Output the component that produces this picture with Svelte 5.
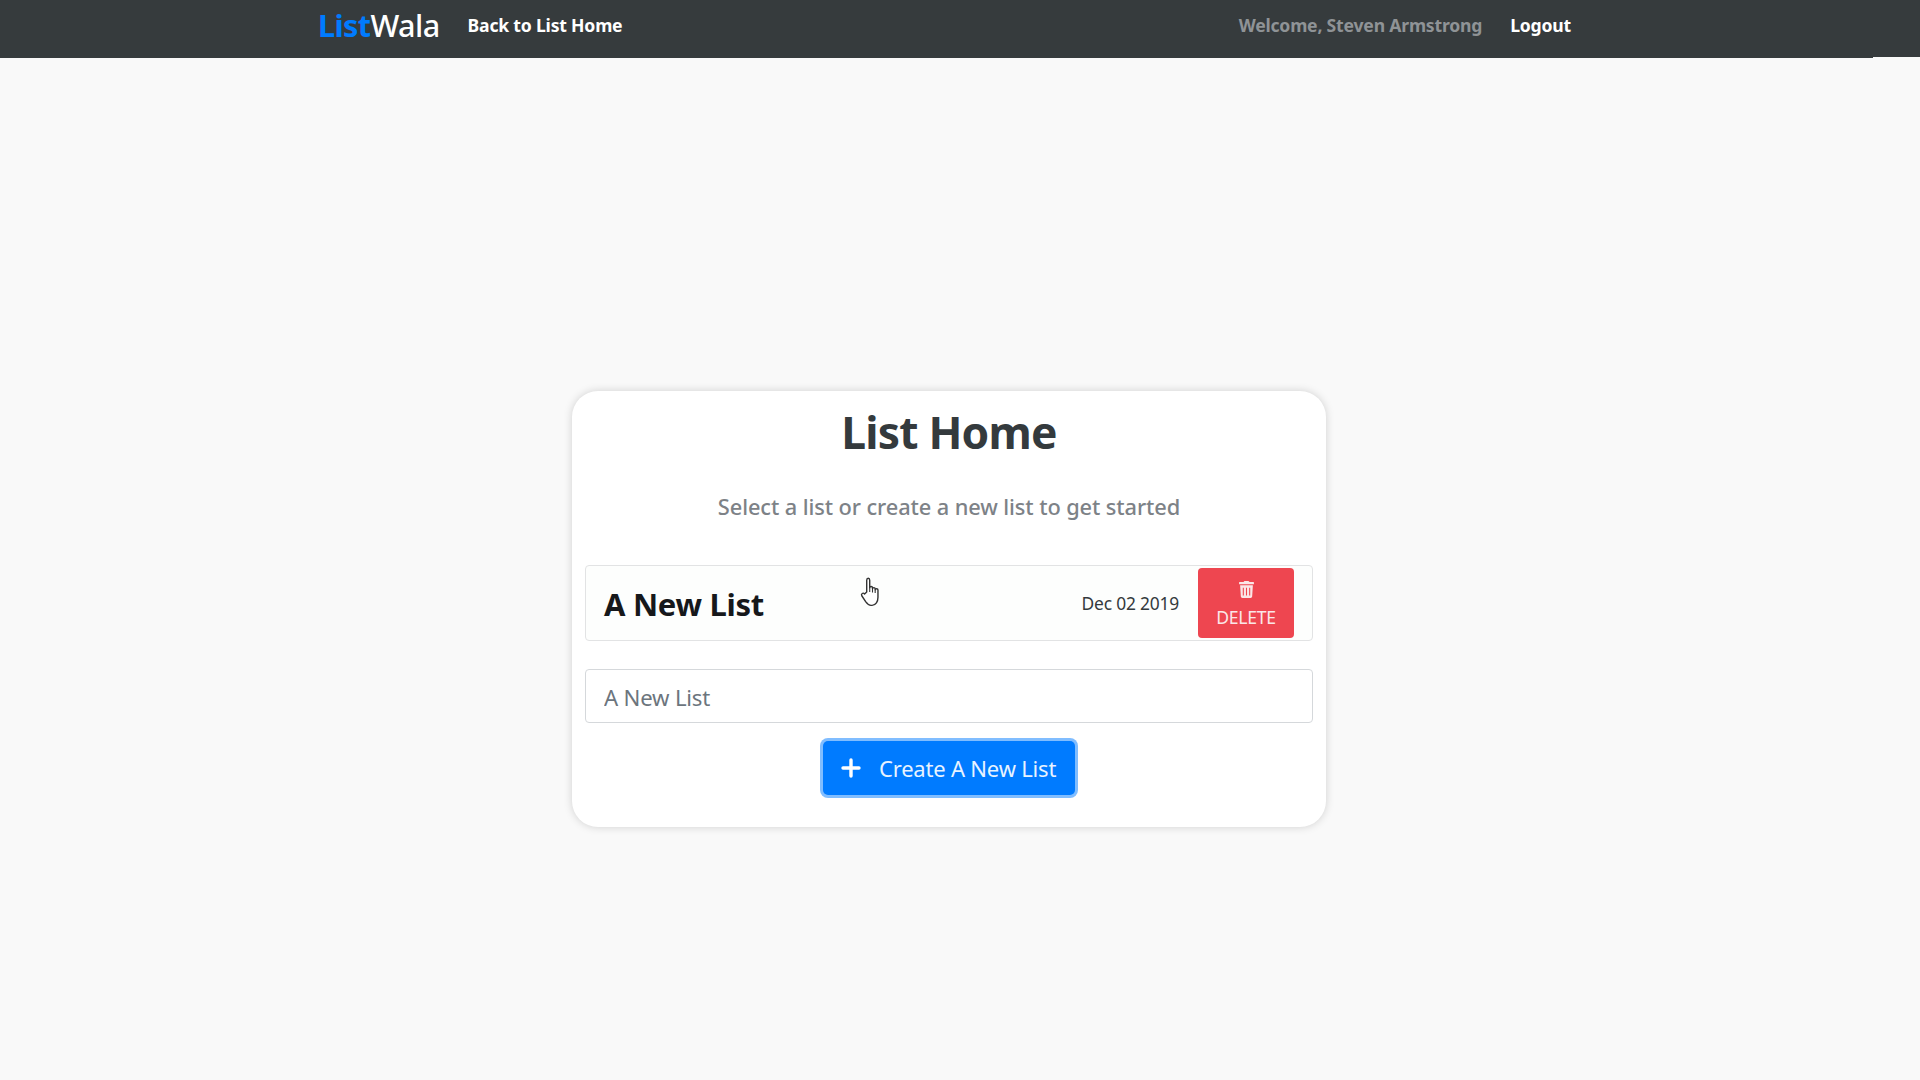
<script>
  let lists = [{ id: 1, name: 'A New List', date: 'Dec 02 2019' }];
</script>

<nav class="navbar">
  <div class="nav-inner">
    <a class="brand" href="#home"><span class="brand-list">List</span>Wala</a>
    <a class="nav-link back" href="#home">Back to List Home</a>
    <span class="welcome">Welcome, Steven Armstrong</span>
    <a class="nav-link" href="#logout">Logout</a>
  </div>
</nav>

<main class="page">
  <section class="card">
    <h1>List Home</h1>
    <p class="lead">Select a list or create a new list to get started</p>

    <ul class="lists">
      {#each lists as list (list.id)}
        <li class="list-item">
          <h2>{list.name}</h2>
          <span class="date">{list.date}</span>
          <button class="delete">
            <svg class="trash" viewBox="0 0 448 512" aria-hidden="true">
              <path fill="currentColor" d="M432 32H312l-9.4-18.7A24 24 0 0 0 281.1 0H166.8a23.7 23.7 0 0 0-21.4 13.3L136 32H16A16 16 0 0 0 0 48v32a16 16 0 0 0 16 16h416a16 16 0 0 0 16-16V48a16 16 0 0 0-16-16zM53.2 467a48 48 0 0 0 47.9 45h245.8a48 48 0 0 0 47.9-45L416 128H32zM144 200v240h-32V200zm96 0v240h-32V200zm96 0v240h-32V200z"/>
            </svg>
            <span>DELETE</span>
          </button>
          <svg class="cursor" viewBox="0 0 20 28" aria-hidden="true">
            <path fill="#fff" stroke="#333" stroke-width="1.3" stroke-linejoin="round" d="M6 14V3c0-2.4 2.8-2.4 2.8 0v7c0-1.6 2.6-1.6 2.6 0v1c0-1.5 2.5-1.5 2.5 0v1c0-1.4 2.6-1.4 2.6.2V19c0 4-2 7.5-5.5 7.5H10c-2.5 0-3.6-1.5-5-3.5L1.4 17.5c-1-1.8 1.2-3.3 2.6-1.7z"/>
            <path fill="none" stroke="#333" stroke-width="1" d="M8.8 10v4M11.4 11v3.5M13.9 12v3"/>
          </svg>
        </li>
      {/each}
    </ul>

    <input class="new-list" type="text" placeholder="A New List" />

    <button class="create">
      <svg class="plus" viewBox="0 0 20 20" aria-hidden="true">
        <path fill="none" stroke="currentColor" stroke-width="3.4" stroke-linecap="round" d="M10 2v16M2 10h16"/>
      </svg>
      Create A New List
    </button>
  </section>
</main>

<style>
  :global(body) {
    margin: 0;
    background: #f9f9f9;
    font-family: "Noto Sans", "Open Sans", sans-serif;
    color: #343a3d;
  }

  .navbar {
    position: relative;
    height: 58px;
    background: #363b3d;
  }

  /* the bar is a pixel shorter at the far right in the reference */
  .navbar::after {
    content: "";
    position: absolute;
    right: 0;
    bottom: 0;
    width: 47px;
    height: 1px;
    background: #f9f9f9;
  }

  .nav-inner {
    display: flex;
    align-items: center;
    height: 50px;
    width: 1253px;
    margin-left: 318px;
  }

  .brand {
    font-size: 30.6px;
    font-weight: 500;
    color: #fff;
    text-decoration: none;
    letter-spacing: -0.6px;
  }

  .brand-list {
    color: #007bff;
    font-weight: 700;
  }

  .nav-link {
    font-size: 17.6px;
    font-weight: 700;
    color: #fff;
    text-decoration: none;
    letter-spacing: -0.2px;
  }

  .back {
    margin-left: 28px;
  }

  .welcome {
    margin-left: auto;
    margin-right: 28px;
    font-size: 17.6px;
    font-weight: 700;
    color: #8f9396;
    letter-spacing: -0.2px;
  }

  .page {
    display: flex;
    justify-content: center;
    padding: 333px 22px 40px 0;
  }

  .card {
    display: flex;
    flex-direction: column;
    box-sizing: border-box;
    width: 754px;
    height: 436px;
    padding: 0 13px;
    background: #fff;
    border-radius: 26px;
    box-shadow: 0 0 8px rgba(0, 0, 0, 0.17);
  }

  h1 {
    margin: 13px 0 0;
    font-size: 44.4px;
    line-height: 56px;
    font-weight: 700;
    text-align: center;
    letter-spacing: -0.8px;
  }

  .lead {
    margin: 32px 0 0;
    font-size: 21.8px;
    line-height: 30px;
    font-weight: 500;
    text-align: center;
    color: #7d8287;
    letter-spacing: -0.1px;
  }

  .lists {
    list-style: none;
    margin: 43px 0 0;
    padding: 0;
  }

  .list-item {
    position: relative;
    display: flex;
    align-items: center;
    box-sizing: border-box;
    height: 76px;
    padding: 0 18px;
    background: #fdfefd;
    border: 1px solid #e2e3e4;
    border-radius: 4px;
  }

  h2 {
    margin: 0;
    padding-top: 2px;
    flex: 1;
    font-size: 31px;
    line-height: 40px;
    font-weight: 700;
    color: #16181b;
    letter-spacing: -0.3px;
  }

  .date {
    margin-right: 19px;
    font-size: 17.4px;
    color: #343a3d;
    letter-spacing: -0.2px;
  }

  .delete {
    display: flex;
    flex-direction: column;
    align-items: center;
    justify-content: center;
    gap: 8px;
    width: 96px;
    height: 70px;
    padding: 3px 0 0;
    font: inherit;
    font-size: 17.6px;
    line-height: 22px;
    color: #fbe6e7;
    background: #ee4650;
    border: none;
    border-radius: 4px;
    letter-spacing: -0.3px;
  }

  .trash {
    width: 15px;
    height: 17px;
  }

  .cursor {
    position: absolute;
    left: 274px;
    top: 11px;
    width: 22px;
    height: 30px;
  }

  .new-list {
    box-sizing: border-box;
    width: 100%;
    height: 54px;
    margin-top: 28px;
    padding: 3px 18px 0;
    font: inherit;
    font-size: 22.2px;
    color: #495057;
    background: #fff;
    border: 1px solid #d5d8db;
    border-radius: 4px;
    letter-spacing: -0.2px;
  }

  .new-list::placeholder {
    color: #6c757d;
    opacity: 1;
  }

  .create {
    display: flex;
    align-items: center;
    align-self: center;
    gap: 18px;
    box-sizing: border-box;
    width: 252px;
    height: 54px;
    margin-top: 18px;
    padding: 0 0 0 18px;
    font: inherit;
    font-size: 22px;
    color: #e8f3ff;
    background: #007bff;
    border: none;
    border-radius: 5px;
    box-shadow: 0 0 0 3px #80bdff;
    letter-spacing: -0.2px;
    white-space: nowrap;
  }

  .plus {
    width: 20px;
    height: 20px;
    color: #fff;
  }
</style>
